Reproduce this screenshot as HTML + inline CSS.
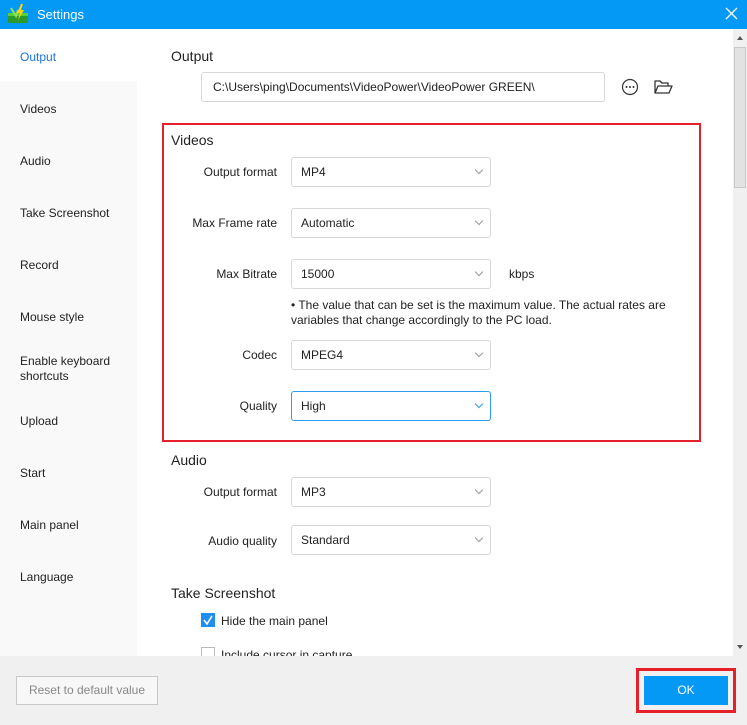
<!DOCTYPE html>
<html><head><style>
*{margin:0;padding:0;box-sizing:border-box}
body{width:747px;height:725px;position:relative;overflow:hidden;background:#fff;font-family:"Liberation Sans",Arial,sans-serif;font-size:12px;color:#222}
.abs{position:absolute}
.title{left:0;top:0;width:747px;height:29px;background:#0599f6;color:#fff;font-size:13px}
.side{left:0;top:81px;width:137px;height:575px;background:#f9f9f9}
.si{position:absolute;left:20px;font-size:12px;color:#222}
.h{position:absolute;font-size:14px;color:#222}
.lab{position:absolute;text-align:right;width:120px;left:157px;font-size:12px}
.dd{position:absolute;left:291px;width:200px;height:30px;border:1px solid #d8d8d8;border-radius:3px;padding:0 9px;line-height:28px;font-size:12px;background:#fff}
.dd::after{content:"";position:absolute;right:8px;top:9px;width:5px;height:5px;border-right:1px solid #999;border-bottom:1px solid #999;transform:rotate(45deg)}
.dd.act{border-color:#2d9df0}
.dd.act::after{border-color:#2d9df0}
</style></head><body>
<div class="abs title">
 <svg class="abs" style="left:7px;top:4px" width="22" height="20" viewBox="0 0 22 20"><rect x="1" y="9" width="20" height="10" rx="1" fill="#2a9a2a"/><rect x="1" y="9" width="20" height="3" fill="#5ccf3c"/><path d="M4 4 L9 12 L11 6" stroke="#8fe060" stroke-width="2" fill="none"/><path d="M14 0 L10 9 L13 9 L11 16 L17 6 L14 6 L16 0Z" fill="#ffd400"/></svg>
 <span class="abs" style="left:37px;top:7px">Settings</span>
 <svg class="abs" style="left:725px;top:7px" width="13" height="13"><path d="M1 1L12 12M12 1L1 12" stroke="#fff" stroke-width="1.3"/></svg>
</div>
<div class="abs side"></div>
<div class="si" style="top:50px;color:#1a73e8">Output</div>
<div class="si" style="top:102px">Videos</div>
<div class="si" style="top:154px">Audio</div>
<div class="si" style="top:206px">Take Screenshot</div>
<div class="si" style="top:258px">Record</div>
<div class="si" style="top:310px">Mouse style</div>
<div class="si" style="top:354px;line-height:15px">Enable keyboard<br>shortcuts</div>
<div class="si" style="top:414px">Upload</div>
<div class="si" style="top:466px">Start</div>
<div class="si" style="top:518px">Main panel</div>
<div class="si" style="top:570px">Language</div>

<div class="h" style="left:171px;top:48px">Output</div>
<div class="abs" style="left:201px;top:72px;width:404px;height:30px;border:1px solid #d8d8d8;border-radius:3px;padding-left:11px;line-height:28px">C:\Users\ping\Documents\VideoPower\VideoPower GREEN\</div>
<svg class="abs" style="left:621px;top:78px" width="18" height="18"><circle cx="9" cy="9" r="7.5" fill="none" stroke="#333" stroke-width="1.2"/><circle cx="5.5" cy="9" r="1" fill="#333"/><circle cx="9" cy="9" r="1" fill="#333"/><circle cx="12.5" cy="9" r="1" fill="#333"/></svg>
<svg class="abs" style="left:654px;top:79px" width="19" height="16"><path d="M1 14V2h5l2 2h6v3M1 14l3-7h14l-3 7z" fill="none" stroke="#333" stroke-width="1.3" stroke-linejoin="round"/></svg>

<div class="abs" style="left:162px;top:123px;width:539px;height:319px;border:2px solid #e5202a"></div>
<div class="h" style="left:171px;top:132px">Videos</div>
<div class="lab" style="top:165px">Output format</div><div class="dd" style="top:157px">MP4</div>
<div class="lab" style="top:216px">Max Frame rate</div><div class="dd" style="top:208px">Automatic</div>
<div class="lab" style="top:267px">Max Bitrate</div><div class="dd" style="top:259px">15000</div>
<div class="abs" style="left:509px;top:267px">kbps</div>
<div class="abs" style="left:291px;top:298px;width:400px;line-height:15px">• The value that can be set is the maximum value. The actual rates are variables that change accordingly to the PC load.</div>
<div class="lab" style="top:348px">Codec</div><div class="dd" style="top:340px">MPEG4</div>
<div class="lab" style="top:399px">Quality</div><div class="dd act" style="top:391px">High</div>

<div class="h" style="left:171px;top:452px">Audio</div>
<div class="lab" style="top:485px">Output format</div><div class="dd" style="top:477px">MP3</div>
<div class="lab" style="top:534px">Audio quality</div><div class="dd" style="top:525px">Standard</div>

<div class="h" style="left:171px;top:585px">Take Screenshot</div>
<div class="abs" style="left:201px;top:613px;width:14px;height:14px;background:#1e8ff0"></div>
<svg class="abs" style="left:201px;top:613px" width="14" height="14"><path d="M3 7l3 4 5-8" stroke="#fff" stroke-width="1.6" fill="none"/></svg>
<div class="abs" style="left:221px;top:614px">Hide the main panel</div>
<div class="abs" style="left:201px;top:647px;width:14px;height:14px;border:1px solid #bbb"></div>
<div class="abs" style="left:221px;top:648px">Include cursor in capture</div>

<div class="abs" style="left:733px;top:29px;width:14px;height:627px;background:#f0f0f0"></div>
<div class="abs" style="left:734px;top:47px;width:12px;height:141px;background:#e2e2e2;border:1px solid #c8c8c8"></div>
<div class="abs" style="left:737px;top:36px;border:3px solid transparent;border-bottom:4px solid #555;border-top:0"></div>
<div class="abs" style="left:737px;top:645px;border:3px solid transparent;border-top:4px solid #555;border-bottom:0"></div>

<div class="abs" style="left:0;top:656px;width:747px;height:69px;background:#f0f0f0"></div>
<div class="abs" style="left:16px;top:676px;width:142px;height:29px;border:1px solid #c8c8c8;background:#f7f7f7;color:#888;text-align:center;line-height:27px">Reset to default value</div>
<div class="abs" style="left:636px;top:668px;width:100px;height:45px;border:3px solid #e5202a"></div>
<div class="abs" style="left:644px;top:676px;width:84px;height:29px;background:#0599f6;color:#fff;text-align:center;line-height:29px">OK</div>
</body></html>
